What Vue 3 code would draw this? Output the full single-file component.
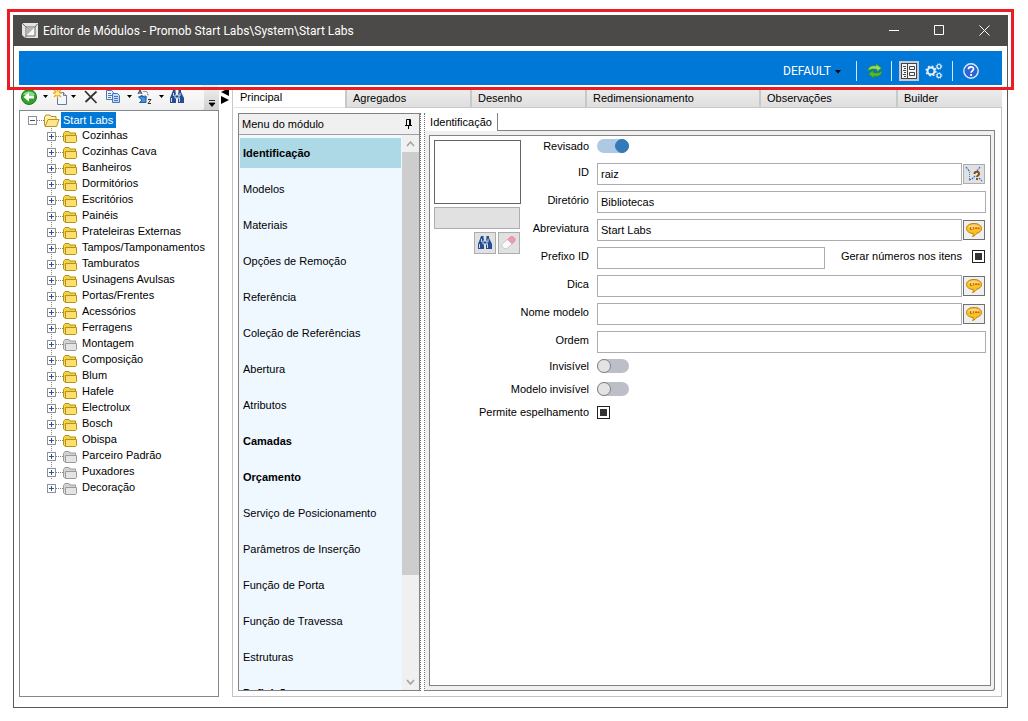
<script setup>
import { ref } from 'vue'

const tabs = ['Principal', 'Agregados', 'Desenho', 'Redimensionamento', 'Observações', 'Builder']

const menu = [
  { name: 'Identificação', bold: true, active: true },
  { name: 'Modelos' },
  { name: 'Materiais' },
  { name: 'Opções de Remoção' },
  { name: 'Referência' },
  { name: 'Coleção de Referências' },
  { name: 'Abertura' },
  { name: 'Atributos' },
  { name: 'Camadas', bold: true },
  { name: 'Orçamento', bold: true },
  { name: 'Serviço de Posicionamento' },
  { name: 'Parâmetros de Inserção' },
  { name: 'Função de Porta' },
  { name: 'Função de Travessa' },
  { name: 'Estruturas' },
  { name: 'Definição', bold: true }
]

const folders = [
  'Cozinhas', 'Cozinhas Cava', 'Banheiros', 'Dormitórios', 'Escritórios', 'Painéis',
  'Prateleiras Externas', 'Tampos/Tamponamentos', 'Tamburatos', 'Usinagens Avulsas',
  'Portas/Frentes', 'Acessórios', 'Ferragens', 'Montagem', 'Composição', 'Blum', 'Hafele',
  'Electrolux', 'Bosch', 'Obispa', 'Parceiro Padrão', 'Puxadores', 'Decoração'
]
const emptyFolders = ['Montagem', 'Parceiro Padrão', 'Puxadores', 'Decoração']

const reviewed = ref(true)
const fields = ref([
  { id: 'fid', label: 'ID', value: 'raiz', extra: 'pick' },
  { id: 'dir', label: 'Diretório', value: 'Bibliotecas' },
  { id: 'abbr', label: 'Abreviatura', value: 'Start Labs', extra: 'note' },
  { id: 'prefix', label: 'Prefixo ID', value: '', extra: 'numbers' },
  { id: 'tip', label: 'Dica', value: '', extra: 'note' },
  { id: 'model', label: 'Nome modelo', value: '', extra: 'note' },
  { id: 'order', label: 'Ordem', value: '' }
])
</script>

<template>
  <div class="page">
    <main class="window">
      <header class="titlebar">
        <svg class="app-icon" width="16" height="16" viewBox="0 0 16 16">
          <path d="M0 0h16v15H3L0 12z" fill="#e4e4e4" />
          <path d="M4 4h9v9H4z" fill="#f8f8f8" stroke="#6b6a68" />
          <path d="M5 12V5h7z" fill="#b4b4b4" />
          <path d="M0 0l4 4M15.500 1l-2.500 3M3 15l1-2" stroke="#6b6a68" fill="none" />
        </svg>
        <h1>Editor de Módulos - Promob Start Labs\System\Start Labs</h1>
        <div class="controls">
          <button aria-label="Minimizar"><svg width="11" height="11"><path d="M0 5.500h10" stroke="#fff" /></svg></button>
          <button aria-label="Maximizar"><svg width="11" height="11"><path d="M.5.5h9v9h-9z" stroke="#fff" fill="none" /></svg></button>
          <button aria-label="Fechar"><svg width="11" height="11"><path d="M.5.5l10 10m0-10l-10 10" stroke="#fff" /></svg></button>
        </div>
      </header>

      <div class="body">
        <nav class="bluebar">
          <div class="profile">
            <select aria-label="Perfil"><option>DEFAULT</option></select>
            <svg width="6" height="4"><path d="M0 0h6L3 3.500z" fill="#000" /></svg>
          </div>
          <span class="sep"></span>
          <button aria-label="Atualizar" class="tool refresh">
            <svg width="16" height="16" viewBox="0 0 16 16" stroke="#35861f" stroke-width=".8" stroke-linejoin="round">
              <path d="M1 8C1 3.500 5.500 1.800 9 3V.8L14.500 5 10 9V6.600C6.500 5.500 4 6 1 8z" fill="#8fe05f" />
              <path d="M15 8c0 4.500-4.500 6.200-8 5v2.200L1.500 11 6 7v2.400C9.500 10.500 12 10 15 8z" fill="#55b92f" />
            </svg>
          </button>
          <span class="sep"></span>
          <button aria-label="Painel" class="tool panel">
            <svg width="16" height="16" viewBox="0 0 16 16" fill="none" stroke="#444">
              <rect x=".5" y=".5" width="15" height="15" fill="#f4f4f4" />
              <path d="M6.500 1v14" />
              <path d="M8.500 3.500h5v3h-5zM8.500 9.500h5v3h-5zM2 3.500h3M3 5.500h2M2 7.500h3M3 9.500h2M2 11.500h3M3 13.500h2" />
            </svg>
          </button>
          <button aria-label="Configurações" class="tool gears">
            <svg width="18" height="16" viewBox="0 0 18 16" fill="none" stroke="#e8f1fa">
              <circle cx="6" cy="8" r="3.500" stroke-width="2" />
              <circle cx="6" cy="8" r="4.900" stroke-width="1.400" stroke-dasharray="1.900 1.950" />
              <circle cx="14" cy="3.500" r="2" stroke-width="1.200" />
              <circle cx="14" cy="3.500" r="2.900" stroke-width=".8" stroke-dasharray="1.100 1.170" />
              <circle cx="14" cy="12.500" r="2" stroke-width="1.200" />
              <circle cx="14" cy="12.500" r="2.900" stroke-width=".8" stroke-dasharray="1.100 1.170" />
            </svg>
          </button>
          <span class="sep"></span>
          <button aria-label="Ajuda" class="tool help">
            <svg width="16" height="16" viewBox="0 0 16 16">
              <circle cx="8" cy="8" r="7.200" fill="#2d66d2" stroke="#dce8fb" stroke-width="1.400" />
              <path d="M5.500 6.300C5.500 3 10.600 3.200 10.500 6c0 1.800-2.400 1.900-2.400 3.800" fill="none" stroke="#fff" stroke-width="1.700" />
              <circle cx="8.100" cy="12" r="1.100" fill="#fff" />
            </svg>
          </button>
        </nav>

        <div class="workspace">
          <aside class="sidebar">
            <div class="treebar">
              <div class="treetools">
                <button aria-label="Voltar">
                  <svg width="16" height="16" viewBox="0 0 16 16">
                    <circle cx="8" cy="8" r="7.500" fill="#2fa32a" stroke="#1d7a1b" />
                    <path d="M2 6a6.500 5.500 0 0 1 12 0z" fill="#8bd883" />
                    <path d="M2.500 8L8 3.200V6.500h5v3H8v3.300z" fill="#fff" />
                  </svg>
                </button>
                <button aria-label="Opções de voltar" class="drop"><svg width="5" height="3"><path d="M0 0h5L2.500 3z" /></svg></button>
                <button aria-label="Novo">
                  <svg width="16" height="16" viewBox="0 0 16 16">
                    <path d="M4.500 3.500h6l3 3v9h-9z" fill="#f2f6fd" stroke="#6a7a99" />
                    <path d="M10.500 3.500v3h3" fill="#cbd9f0" stroke="#6a7a99" />
                    <path d="M0 4h9M4.500 0v9M1 1l7 7M8 1L1 8" stroke="#f2a51c" stroke-width="1.400" />
                    <circle cx="4.500" cy="4.500" r="2" fill="#fff0a0" />
                  </svg>
                </button>
                <button aria-label="Opções de novo" class="drop tight"><svg width="5" height="3"><path d="M0 0h5L2.500 3z" /></svg></button>
                <button aria-label="Excluir" class="wide">
                  <svg width="14" height="14" viewBox="0 0 14 14"><path d="M1 1l11.500 12M12.500 1.500L1.500 12" fill="none" stroke="#333" stroke-width="1.800" /></svg>
                </button>
                <button aria-label="Copiar">
                  <svg width="16" height="15" viewBox="0 0 16 15" stroke="#4c76b5">
                    <path d="M1.500 1.500h5l2 2v7h-7z" fill="#eaf3ff" />
                    <path d="M3 4.500h3M3 6.500h4M3 8.500h3" />
                    <path d="M7.500 4.500h5l2 2v7h-7z" fill="#bfdcff" />
                    <path d="M9 7.500h4M9 9.500h4M9 11.500h4" />
                  </svg>
                </button>
                <button aria-label="Opções de copiar" class="drop"><svg width="5" height="3"><path d="M0 0h5L2.500 3z" /></svg></button>
                <button aria-label="Ordenar">
                  <svg width="16" height="16" viewBox="0 0 16 16" fill="none" stroke="#333">
                    <path d="M1 5l2-4 2 4M2 4h2M11 10.500h3l-3 4h3" />
                    <path d="M6.500 2.500h2c2 0 2.500 2 2.500 5" stroke-dasharray="1 1" />
                    <path d="M2.500 7.500l2.500-1 4 3V7.500M9 7v6.500H2.500L5 11 1.500 8z" fill="#4b93dd" stroke="#1e5da8" />
                  </svg>
                </button>
                <button aria-label="Opções de ordenar" class="drop"><svg width="5" height="3"><path d="M0 0h5L2.500 3z" /></svg></button>
                <button aria-label="Localizar">
                  <svg width="16" height="14" viewBox="0 0 16 14">
                    <path d="M4 0h2.500v2L7 4v9H1V8l2-5zM9.500 0H12v2l1 2 2 4v5H9V4l.5-2z" fill="#284d8f" />
                    <path d="M6 5h4v3H6zM2.500 8v4M10.500 8v4M4.500 3v3M11 3v3" fill="#284d8f" stroke="#c5dcf8" />
                  </svg>
                </button>
              </div>
              <button aria-label="Mais opções" class="overflow"><svg width="8" height="7"><path d="M1 .5h6M1 3h6L4 6.500z" stroke="#000" stroke-width=".8" /></svg></button>
            </div>

            <div class="tree">
              <div class="node root">
                <button aria-label="Recolher" class="expander"><svg width="9" height="9"><rect x=".5" y=".5" width="8" height="8" fill="#fff" stroke="#919191" /><path d="M2 4.500h5" stroke="#3050a0" /></svg></button>
                <span class="link"></span>
                <svg width="16" height="13" viewBox="0 0 16 13" stroke="#b8922a">
                  <path d="M.5 11.500V3l1.500-2h4l1 1.500h5v3" fill="#fff1ae" />
                  <path d="M1 12.500L4 5.500h11l-2.500 7z" fill="#fbe68c" />
                </svg>
                <span class="selected">Start Labs</span>
              </div>
              <ul>
                <li v-for="name in folders" :key="name" class="node" :class="{ gray: emptyFolders.includes(name) }">
                  <button :aria-label="'Expandir ' + name" class="expander"><svg width="9" height="9"><rect x=".5" y=".5" width="8" height="8" fill="#fff" stroke="#919191" /><path d="M2 4.500h5M4.500 2v5" stroke="#3050a0" /></svg></button>
                  <span class="link"></span>
                  <svg class="folder" width="14" height="12" viewBox="0 0 14 12">
                    <path class="back" d="M.5 10V2.500l1.500-2h4L7 2h5.500v2" />
                    <path class="front" d="M.5 3v7l2 1.500" />
                    <path class="front" d="M2.500 4.500h11v6l-1 1h-10z" />
                  </svg>
                  <span class="name">{{ name }}</span>
                </li>
              </ul>
            </div>
          </aside>

          <div class="splitter">
            <svg width="10" height="16"><path d="M9 0v8L1 4zM1 8v8l8-4z" /></svg>
          </div>

          <section class="editor">
            <div class="tabs">
              <button v-for="(t, i) in tabs" :key="t" :class="{ on: i === 0 }">{{ t }}</button>
            </div>
            <div class="pane">
              <div class="menu">
                <div class="menu-head">
                  <span>Menu do módulo</span>
                  <button aria-label="Fixar">
                    <svg width="7" height="10"><path d="M1.500 6V.5h4V6M0 6.500h7M3.500 7v3M4.500 1v5" fill="none" stroke="#000" /></svg>
                  </button>
                </div>
                <div class="menu-body">
                  <ul>
                    <li v-for="m in menu" :key="m.name" :class="{ bold: m.bold, active: m.active }">{{ m.name }}</li>
                  </ul>
                  <div class="scroll">
                    <svg width="9" height="6"><path d="M1 5l3.500-4L8 5" fill="none" stroke="#a0a0a0" stroke-width="1.500" /></svg>
                    <div class="track"><div class="thumb"></div></div>
                    <svg width="9" height="6"><path d="M1 1l3.500 4L8 1" fill="none" stroke="#a0a0a0" stroke-width="1.500" /></svg>
                  </div>
                </div>
              </div>
              <div class="grip"></div>
              <div class="detail">
                <div class="subtabs"><button>Identificação</button><span></span></div>
                <div class="frame">
                  <form class="form" @submit.prevent>
                    <div class="preview">
                      <div class="picture"></div>
                      <div class="path"></div>
                      <div class="actions">
                        <button type="button" aria-label="Localizar imagem" class="square">
                          <svg width="16" height="14" viewBox="0 0 16 14">
                            <path d="M4 0h2.500v2L7 4v9H1V8l2-5zM9.500 0H12v2l1 2 2 4v5H9V4l.5-2z" fill="#284d8f" />
                            <path d="M6 5h4v3H6zM2.500 8v4M10.500 8v4M4.500 3v3M11 3v3" fill="#284d8f" stroke="#c5dcf8" />
                          </svg>
                        </button>
                        <button type="button" aria-label="Limpar imagem" class="square">
                          <svg width="16" height="14" viewBox="0 0 16 14">
                            <path d="M8.500 1.500c1.500-1.300 3-1.300 4.500 0s1.800 2.500.5 4L11 8 6.500 3.500z" fill="#f19aaa" stroke="#d9808f" stroke-width=".6" />
                            <path d="M6.500 3.500L11 8l-4.500 4c-1.200 1-2.500 1-3.700 0L1.500 11c-1-1-1-2.300 0-3.300z" fill="#fbfbfb" stroke="#b4acac" stroke-width=".6" />
                          </svg>
                        </button>
                      </div>
                    </div>

                    <label for="rev" class="lbl short">Revisado</label>
                    <div class="cell short"><input id="rev" v-model="reviewed" type="checkbox" role="switch" class="toggle" /></div>

                    <template v-for="(f, i) in fields" :key="f.id">
                      <label :for="f.id" class="lbl" :class="{ full: i > 3 }">{{ f.label }}</label>
                      <div class="cell">
                        <input :id="f.id" v-model="f.value" type="text" />
                        <button v-if="f.extra === 'pick'" type="button" aria-label="Gerar ID" class="side pick">
                          <svg width="18" height="16" viewBox="0 0 18 16" fill="none">
                            <path d="M1 1l4 5M15 1l-3 4M4 14l3-1 3-3M14 12l3 3" stroke="#2f62e0" stroke-width="1.200" stroke-dasharray="2 1" />
                            <path d="M4.500 6v8" stroke="#2492b8" stroke-dasharray="1 1" />
                            <path d="M9.500 8c0-3 5-3 4.500 0 0 1.500-2 1.500-2 3M12 12v2" stroke="#80500f" stroke-width="2" />
                          </svg>
                        </button>
                        <button v-if="f.extra === 'note'" type="button" :aria-label="'Traduzir ' + f.label" class="side note">
                          <svg width="16" height="14" viewBox="0 0 16 14">
                            <path d="M8 .5c4.500 0 7.500 2 7.500 5 0 2.800-2.500 4.300-5 4.800-.5 1.500-2 2.700-4 3.200.8-1 1-2 .8-3C3.500 10.300.5 8.500.5 5.500c0-3 3-5 7.500-5z" fill="#fbc41c" stroke="#bd7c0c" />
                            <path d="M2 4.500C2.500.800 13.500.8 14 4.500z" fill="#fcd092" />
                            <path d="M4.500 4v2.500M4 6.500h2M7.500 4v2.500" stroke="#a77a27" fill="none" />
                            <path d="M9 4.500h2V6H9zM11.500 4.500h2V6h-2z" fill="#db571c" />
                          </svg>
                        </button>
                        <template v-if="f.extra === 'numbers'">
                          <label for="gen" class="gen">Gerar números nos itens</label>
                          <input id="gen" type="checkbox" class="mixed" :indeterminate="true" />
                        </template>
                      </div>
                    </template>

                    <label for="inv" class="lbl full short">Invisível</label>
                    <div class="cell short"><input id="inv" type="checkbox" role="switch" class="toggle" /></div>
                    <label for="minv" class="lbl full short">Modelo invisível</label>
                    <div class="cell short"><input id="minv" type="checkbox" role="switch" class="toggle" /></div>
                    <label for="mirror" class="lbl full short">Permite espelhamento</label>
                    <div class="cell short"><input id="mirror" type="checkbox" class="mixed" :indeterminate="true" /></div>
                  </form>
                </div>
              </div>
            </div>
          </section>
        </div>
      </div>
    </main>
    <div class="highlight"></div>
  </div>
</template>

<style>
body {
  background: #fff;
}
</style>

<style scoped>
*,
*::before {
  box-sizing: border-box;
}
.page {
  position: relative;
  display: flex;
  height: 100vh;
  padding: 15px 20px 13px 13px;
  font: 11px/16px "Liberation Sans", Arial, sans-serif;
  color: #000;
}
button {
  display: flex;
  align-items: center;
  justify-content: center;
  margin: 0;
  padding: 0;
  border: 0;
  background: none;
  font: inherit;
  color: inherit;
}
ul {
  margin: 0;
  padding: 0;
  list-style: none;
}
svg {
  flex: none;
  display: block;
}
.highlight {
  position: absolute;
  top: 9px;
  left: 7px;
  right: 14px;
  height: 81px;
  border: 3px solid #ed1c24;
  pointer-events: none;
}
.window {
  flex: 1;
  min-width: 0;
  display: flex;
  flex-direction: column;
  border: 1px solid #5a5a5a;
  border-top: 0;
}
.titlebar {
  display: flex;
  align-items: center;
  height: 31px;
  flex: none;
  margin: 0 -1px;
  padding-left: 9px;
  background: #4c4a48;
  color: #fff;
}
.titlebar h1 {
  flex: 1;
  margin: 0 0 0 5px;
  font: 12px/16px Roboto, "Noto Sans", sans-serif;
}
.controls {
  display: flex;
  margin-right: 1px;
}
.controls button {
  width: 45px;
  height: 31px;
}
.body {
  flex: 1;
  min-height: 0;
  display: flex;
  flex-direction: column;
  padding: 5px 5px 10px;
}
.bluebar {
  flex: none;
  display: flex;
  align-items: center;
  justify-content: flex-end;
  height: 34px;
  padding: 6px 23px 0 0;
  background: #0078d7;
}
.profile {
  position: relative;
}
.profile select {
  appearance: none;
  display: block;
  width: 60px;
  padding: 0;
  border: 0;
  background: none;
  color: #fff;
  font: 12px/16px Roboto, "Noto Sans", sans-serif;
}
.profile svg {
  position: absolute;
  right: 2px;
  top: 7px;
}
.sep {
  width: 1px;
  height: 20px;
  background: #d5e6f5;
  margin: 0 7px 0 8px;
}
.profile + .sep {
  margin: 0 10px 0 13px;
}
.panel {
  width: 20px;
  height: 20px;
  background: #c4cbd6;
}
.gears {
  margin-left: 6px;
}
.gears + .sep {
  margin: 0 10px 0 9px;
}
.workspace {
  flex: 1;
  min-height: 0;
  display: flex;
}
.sidebar {
  flex: none;
  width: 200px;
  display: flex;
  flex-direction: column;
}
.treebar {
  display: flex;
  height: 25px;
  flex: none;
  background: #dcdcdc;
}
.treetools {
  flex: 1;
  display: flex;
  align-items: center;
  padding: 0 0 2px 2px;
  background: linear-gradient(#fcfcfc, #f0f0f0);
  border-radius: 0 3px 3px 0;
}
.drop {
  width: 16px;
}
.tight {
  width: 9px;
}
.treetools .wide {
  margin: 0 7px 0 6px;
}
.overflow {
  width: 15px;
  align-items: flex-end;
  padding-bottom: 3px;
  background: linear-gradient(#f2f2f2, #cfcfcf);
}
.tree {
  flex: 1;
  min-height: 0;
  overflow: hidden;
  border: 1px solid #828790;
  padding: 1px 0 0 8px;
}
.node {
  display: flex;
  align-items: center;
  height: 16px;
  white-space: nowrap;
}
.node > svg {
  margin-top: 1px;
}
.link {
  width: 7px;
  border-top: 1px dotted #808080;
}
.selected {
  padding: 0 3px 0 2px;
  margin-left: 1px;
  background: #0078d7;
  color: #fff;
}
.tree ul {
  padding-left: 15px;
}
.tree li {
  padding-left: 4px;
  background: linear-gradient(#808080 50%, transparent 50%) 8px 0 / 1px 2px repeat-y;
}
.tree li:last-child {
  background: none;
}
.folder .back {
  fill: #f5d040;
  stroke: #b8901c;
}
.folder .front {
  fill: #fbe070;
  stroke: #b8901c;
}
.gray .folder .back {
  fill: #d4d4d4;
  stroke: #9a9a9a;
}
.gray .folder .front {
  fill: #e4e4e4;
  stroke: #9a9a9a;
}
.name {
  margin: -2px 0 0 5px;
}
.splitter {
  flex: none;
  width: 13px;
  padding: 3px 0 0 1px;
}
.editor {
  flex: 1;
  min-width: 0;
  display: flex;
  flex-direction: column;
}
.tabs {
  flex: none;
  display: grid;
  grid-template-columns: 113fr 125fr 115fr 174fr 137fr 106fr;
  height: 23px;
}
.tabs button {
  justify-content: flex-start;
  margin-top: 2px;
  padding: 0 0 0 6px;
  border: 1px solid #c8c8c8;
  border-width: 1px 0 1px 2px;
  background: linear-gradient(#ededed, #dfdfdf);
}
.tabs .on {
  padding-left: 7px;
  border-width: 0 0 1px 1px;
  border-bottom-color: #e4e4e4;
  background: #fff;
}
.pane {
  flex: 1;
  min-height: 0;
  display: flex;
  padding: 5px 6px 5px 5px;
  border: 1px solid #c3c3c3;
  border-top: 0;
}
.menu {
  flex: none;
  width: 182px;
  display: flex;
  flex-direction: column;
  border: 1px solid #828282;
}
.menu-head {
  flex: none;
  display: flex;
  align-items: center;
  justify-content: space-between;
  height: 21px;
  padding: 0 7px 0 3px;
  border-bottom: 1px solid #a0a0a0;
  background: #f0f0f0;
}
.menu-body {
  flex: 1;
  min-height: 0;
  display: flex;
  background: #eff7ff;
}
.menu-body ul {
  flex: 1;
  overflow: hidden;
  padding: 3px 1px 0;
}
.menu-body li {
  margin-bottom: 6px;
  padding-left: 3px;
  line-height: 30px;
}
.bold {
  font-weight: bold;
}
.active {
  background: #add8e6;
}
.scroll {
  width: 17px;
  display: flex;
  flex-direction: column;
  align-items: center;
  padding: 6px 0 5px;
  background: #f0f0f0;
}
.track {
  flex: 1;
  align-self: stretch;
  margin: 5px 0;
}
.thumb {
  height: 81%;
  background: #cdcdcd;
}
.grip {
  flex: none;
  width: 5px;
  border: 1px dotted #707070;
  border-width: 0 1px;
}
.detail {
  flex: 1;
  min-width: 0;
  display: flex;
  flex-direction: column;
}
.subtabs {
  flex: none;
  display: flex;
  height: 18px;
}
.subtabs button {
  width: 73px;
  border-right: 1px solid #828282;
}
.subtabs span {
  flex: 1;
  border-bottom: 1px solid #828282;
}
.frame {
  flex: 1;
  min-height: 0;
  padding: 4px 3px 4px 4px;
  border: 1px solid #828282;
  border-width: 0 1px 1px 0;
  border-radius: 0 0 3px 0;
  background: #f0f0f0;
}
.form {
  display: grid;
  grid-template-columns: 87px 68px 1fr;
  grid-template-rows: 24px repeat(7, 28px) repeat(3, 23px);
  height: 100%;
  padding: 0 4px;
  border: 1px solid #828282;
  background: #fff;
}
.preview {
  grid-area: 1 / 1 / 6 / 2;
  padding-top: 4px;
}
.picture {
  height: 64px;
  border: 1px solid #646464;
}
.path {
  height: 22px;
  margin: 3px 1px 3px 0;
  border: 1px solid #adadb3;
  background: #e1e1e1;
}
.actions {
  display: flex;
  justify-content: flex-end;
  gap: 2px;
  padding-right: 1px;
}
.square {
  width: 22px;
  height: 22px;
  border: 1px solid #adadad;
  background: #e1e1e1;
}
.lbl {
  grid-column: 2;
  line-height: 24px;
  text-align: right;
  white-space: nowrap;
}
.lbl.full {
  grid-column: 1 / 3;
}
.lbl.short {
  line-height: 21px;
}
.cell {
  grid-column: 3;
  display: flex;
  align-items: center;
  padding-left: 8px;
}
.cell.short {
  height: 20px;
}
input {
  margin: 0;
}
input[type="text"] {
  flex: 1;
  min-width: 0;
  height: 22px;
  padding: 0 3px;
  border: 1px solid #abadb3;
  background: #fff;
  font: inherit;
  color: #000;
}
.side {
  flex: none;
  width: 22px;
  height: 20px;
  margin: 0 1px;
  border: 1px solid #adadad;
  background: #e1e1e1;
}
.note {
  border-color: #707070;
  background: #f0f0f0;
}
.gen {
  margin: -4px 10px 0 16px;
}
.mixed {
  appearance: none;
  width: 13px;
  height: 13px;
  margin-right: 1px;
  border: 1px solid #222;
  background: linear-gradient(#333, #333) center / 7px 7px no-repeat #fff;
}
.gen + .mixed {
  margin-bottom: 3px;
}
.toggle {
  appearance: none;
  display: flex;
  width: 32px;
  height: 14px;
  border-radius: 7px;
  background: #bcbec8;
}
.toggle::before {
  content: "";
  width: 14px;
  height: 14px;
  border: 1px solid #838383;
  border-radius: 50%;
  background: #e3e3e3;
}
.toggle:checked {
  justify-content: flex-end;
  background: #adc9e3;
}
.toggle:checked::before {
  border-color: #337ab7;
  background: #337ab7;
}
</style>
